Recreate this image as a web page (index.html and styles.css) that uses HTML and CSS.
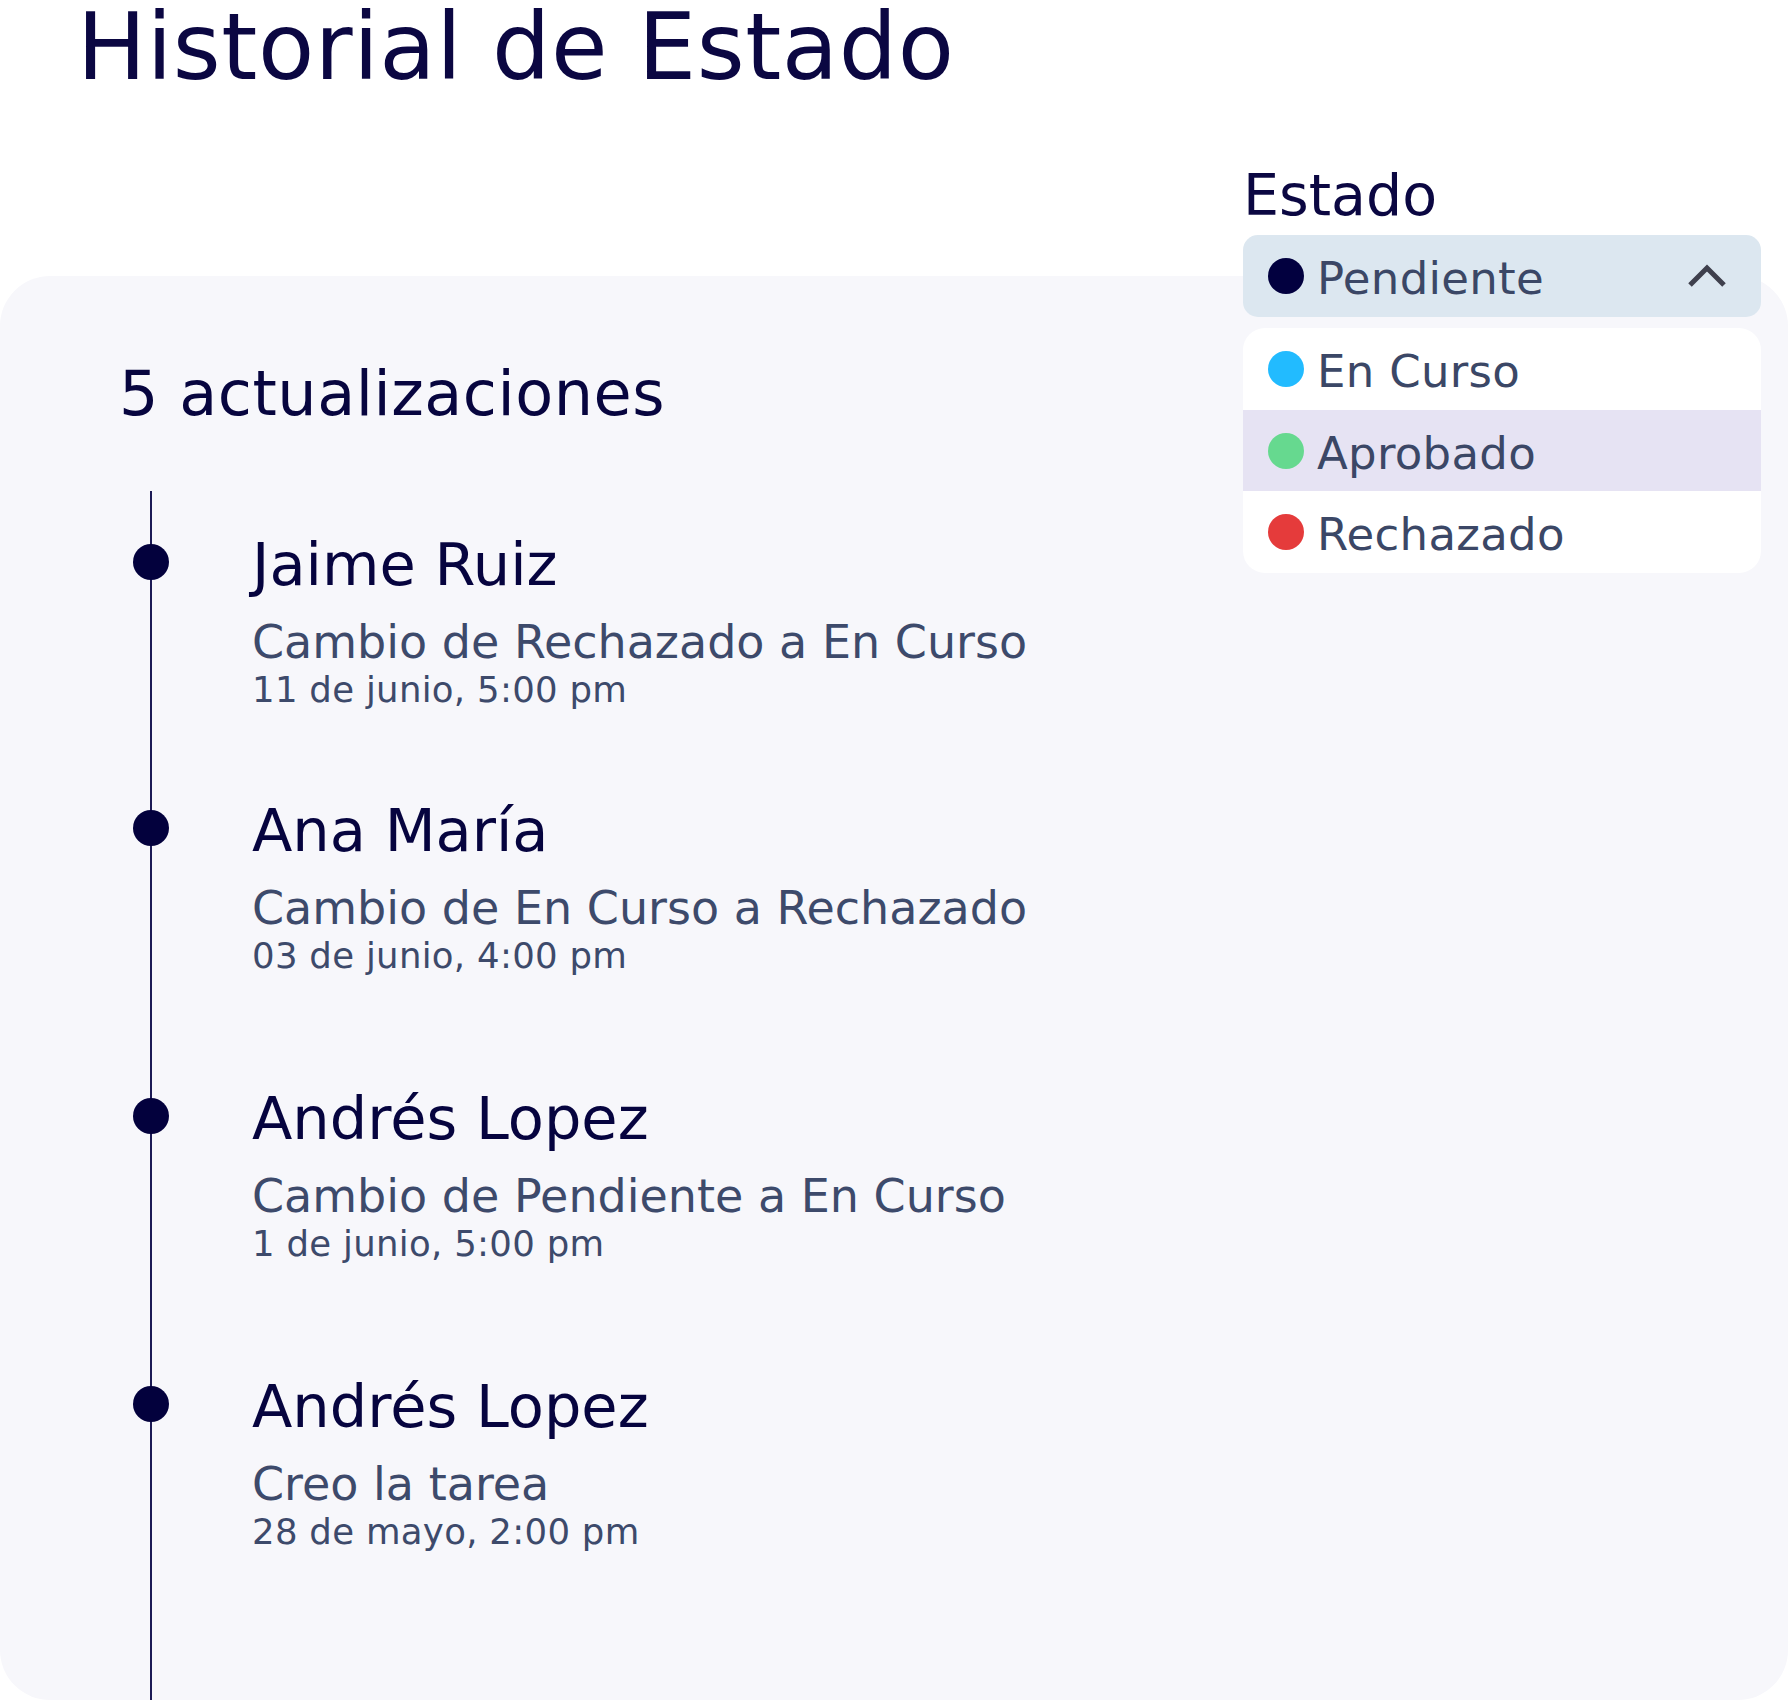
FILE: index.html
```html
<!DOCTYPE html>
<html lang="es">
<head>
<meta charset="utf-8">
<title>Historial de Estado</title>
<link rel="stylesheet" href="styles.css">
</head>
<body>
<div class="page">
  <h1 class="title">Historial de Estado</h1>

  <section class="card">
    <h2 class="count">5 actualizaciones</h2>
    <ol class="timeline">
      <li class="entry">
        <span class="marker"></span>
        <div class="entry-body">
          <p class="name">Jaime Ruiz</p>
          <p class="desc">Cambio de Rechazado a En Curso</p>
          <p class="date">11 de junio, 5:00 pm</p>
        </div>
      </li>
      <li class="entry">
        <span class="marker"></span>
        <div class="entry-body">
          <p class="name">Ana María</p>
          <p class="desc">Cambio de En Curso a Rechazado</p>
          <p class="date">03 de junio, 4:00 pm</p>
        </div>
      </li>
      <li class="entry">
        <span class="marker"></span>
        <div class="entry-body">
          <p class="name">Andrés Lopez</p>
          <p class="desc">Cambio de Pendiente a En Curso</p>
          <p class="date">1 de junio, 5:00 pm</p>
        </div>
      </li>
      <li class="entry">
        <span class="marker"></span>
        <div class="entry-body">
          <p class="name">Andrés Lopez</p>
          <p class="desc">Creo la tarea</p>
          <p class="date">28 de mayo, 2:00 pm</p>
        </div>
      </li>
    </ol>
  </section>

  <div class="status">
    <div class="status-label">Estado</div>
    <div class="select">
      <span class="dot dot-pending"></span>
      <span class="option-text">Pendiente</span>
      <svg class="chevron" width="40" height="24" viewBox="0 0 40 24" aria-hidden="true">
        <polyline points="3,21 20,4 37,21" fill="none" stroke="#3f404d" stroke-width="5"/>
      </svg>
    </div>
    <ul class="menu">
      <li class="option"><span class="dot dot-progress"></span><span class="option-text">En Curso</span></li>
      <li class="option option-active"><span class="dot dot-approved"></span><span class="option-text">Aprobado</span></li>
      <li class="option"><span class="dot dot-rejected"></span><span class="option-text">Rechazado</span></li>
    </ul>
  </div>
</div>
</body>
</html>
```

FILE: styles.css
```css
* {
  box-sizing: border-box;
}

body {
  margin: 0;
  background: #ffffff;
  font-family: "DejaVu Sans", "Noto Sans", sans-serif;
}

.page {
  position: relative;
  width: 1788px;
  height: 1700px;
  overflow: hidden;
}

.title {
  margin: 0;
  padding: 7px 0 0 77px;
  font-size: 92px;
  line-height: 82px;
  letter-spacing: 0.55px;
  font-weight: 400;
  color: #0b0742;
}

.card {
  margin-top: 187px;
  height: 1424px;
  border-radius: 50px;
  background: #f7f7fb;
  padding: 87px 0 0 116px;
  display: flex;
  flex-direction: column;
}

.count {
  margin: 0 0 0 3px;
  font-size: 62px;
  line-height: 62px;
  letter-spacing: 0.55px;
  font-weight: 400;
  color: #07053f;
}

.timeline {
  list-style: none;
  margin: 66px 0 0;
  padding: 44px 0 0 17px;
  flex: 1;
  position: relative;
}

.timeline::before {
  content: "";
  position: absolute;
  left: 34px;
  top: 0;
  bottom: 0;
  width: 2px;
  background: #1c1a55;
}

.entry {
  display: grid;
  grid-template-columns: 36px 1fr;
  column-gap: 83px;
}

.entry + .entry {
  margin-top: 112px;
}

.entry:nth-child(2) {
  margin-top: 90px;
}

.marker {
  width: 36px;
  height: 36px;
  margin-top: 9px;
  border-radius: 50%;
  background: #03013d;
  position: relative;
  z-index: 1;
}

.entry-body p {
  margin: 0;
}

.name {
  font-size: 59px;
  line-height: 60px;
  color: #06043f;
}

.desc {
  margin-top: 21px !important;
  font-size: 46px;
  line-height: 52px;
  color: #3d4a6b;
}

.date {
  font-size: 35.5px;
  line-height: 43px;
  letter-spacing: 0.3px;
  color: #3d4a6b;
}

.status {
  position: absolute;
  top: 167px;
  left: 1243px;
  width: 518px;
}

.status-label {
  font-size: 57px;
  line-height: 57px;
  color: #0b0742;
  margin-bottom: 11px;
}

.select {
  display: flex;
  align-items: center;
  gap: 13px;
  height: 82px;
  padding: 0 34px 0 25px;
  background: #dce7f0;
  border-radius: 15px;
}

.chevron {
  margin-left: auto;
  display: block;
}

.option-text {
  font-size: 45px;
  line-height: 45px;
  padding-top: 5px;
  letter-spacing: 0.3px;
  color: #3b4766;
}

.dot {
  width: 36px;
  height: 36px;
  border-radius: 50%;
  flex: none;
}

.dot-pending { background: #02003f; }
.dot-progress { background: #22bbff; }
.dot-approved { background: #66d98f; }
.dot-rejected { background: #e53b3b; }

.menu {
  list-style: none;
  margin: 11px 0 0;
  padding: 0;
  background: #ffffff;
  border-radius: 22px;
  overflow: hidden;
}

.option {
  display: flex;
  align-items: center;
  gap: 13px;
  height: 81.7px;
  padding-left: 25px;
}

.option-active {
  background: #e6e3f3;
}
```
